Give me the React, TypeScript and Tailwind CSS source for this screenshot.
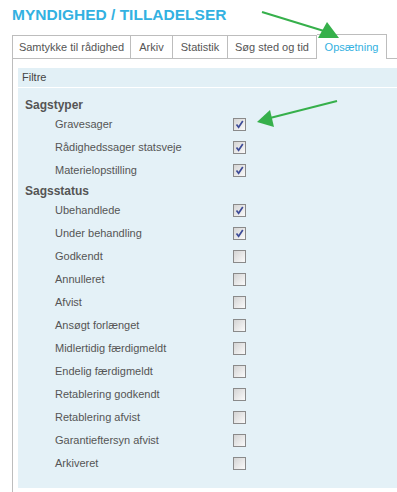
import React from "react";

type Item = { label: string; checked: boolean };

const sagstyper: Item[] = [
  { label: "Gravesager", checked: true },
  { label: "Rådighedssager statsveje", checked: true },
  { label: "Materielopstilling", checked: true },
];

const sagsstatus: Item[] = [
  { label: "Ubehandlede", checked: true },
  { label: "Under behandling", checked: true },
  { label: "Godkendt", checked: false },
  { label: "Annulleret", checked: false },
  { label: "Afvist", checked: false },
  { label: "Ansøgt forlænget", checked: false },
  { label: "Midlertidig færdigmeldt", checked: false },
  { label: "Endelig færdigmeldt", checked: false },
  { label: "Retablering godkendt", checked: false },
  { label: "Retablering afvist", checked: false },
  { label: "Garantieftersyn afvist", checked: false },
  { label: "Arkiveret", checked: false },
];

const tabs = [
  { label: "Samtykke til rådighed", w: "w-[119px] border-l" },
  { label: "Arkiv", w: "w-[42px]" },
  { label: "Statistik", w: "w-[55px]" },
  { label: "Søg sted og tid", w: "w-[89px]" },
];

function CheckBox({ checked }: { checked: boolean }) {
  return (
    <div className="w-[13px] h-[13px] border border-[#8a8a8a] bg-linear-to-br from-[#d4d4d4] to-[#fafafa] flex items-center justify-center">
      {checked && (
        <svg width="9" height="9" viewBox="0 0 9 9">
          <path d="M1.5 4.5 L3.6 7.2 L7.8 1" stroke="#3d4c98" strokeWidth="1.7" fill="none" />
        </svg>
      )}
    </div>
  );
}

function Row({ item }: { item: Item }) {
  return (
    <div className="h-[23px] flex items-center pl-[37px]">
      <span className="w-[178px] text-[11px] text-[#555]">{item.label}</span>
      <CheckBox checked={item.checked} />
    </div>
  );
}

function Arrows() {
  return (
    <svg className="absolute inset-0 pointer-events-none" width="397" height="492">
      <line x1="262" y1="12" x2="324" y2="31" stroke="#36b04b" strokeWidth="2" />
      <polygon points="339,38 318,38 327,22" fill="#36b04b" />
      <line x1="337" y1="101" x2="270" y2="118" stroke="#36b04b" strokeWidth="2" />
      <polygon points="257,122 270,110 274,127" fill="#36b04b" />
    </svg>
  );
}

export default function App() {
  return (
    <div className="relative w-[397px] h-[492px] overflow-hidden bg-white font-['Liberation_Sans',Arial,sans-serif]">
      <h1 className="pl-[12px] pt-[7px] h-[34px] text-[15.5px] leading-[16px] font-bold text-[#33b1e1]">
        MYNDIGHED / TILLADELSER
      </h1>
      <div className="pl-[12px] w-[440px]">
        <div className="flex items-end h-[25px]">
          {tabs.map((t) => (
            <div
              key={t.label}
              className={`${t.w} h-[24px] shrink-0 flex items-center justify-center whitespace-nowrap border-t border-r border-b border-[#bdbdbd] text-[11px] text-[#555]`}
            >
              {t.label}
            </div>
          ))}
          <div className="w-[70px] h-[25px] shrink-0 flex items-center justify-center border-t border-r border-[#bdbdbd] bg-white text-[11px] text-[#33b1e1]">
            Opsætning
          </div>
          <div className="flex-1 h-[24px] border-b border-[#bdbdbd]" />
        </div>
        <div className="border-l border-[#bdbdbd] pl-[5px] pt-[9px] h-[500px]">
          <div className="h-[19px] flex items-center pl-[4px] bg-[#e2f0f6] text-[11px] text-[#444]">
            Filtre
          </div>
          <div className="mt-[1px] bg-[#e4f1f7] pt-[8px] pb-[13px]">
            <div className="h-[17px] flex items-center pl-[7px] text-[12px] font-bold text-[#555]">
              Sagstyper
            </div>
            {sagstyper.map((it) => (
              <Row key={it.label} item={it} />
            ))}
            <div className="h-[17px] flex items-center pl-[7px] text-[12px] font-bold text-[#555]">
              Sagsstatus
            </div>
            {sagsstatus.map((it) => (
              <Row key={it.label} item={it} />
            ))}
          </div>
        </div>
      </div>
      <Arrows />
    </div>
  );
}
